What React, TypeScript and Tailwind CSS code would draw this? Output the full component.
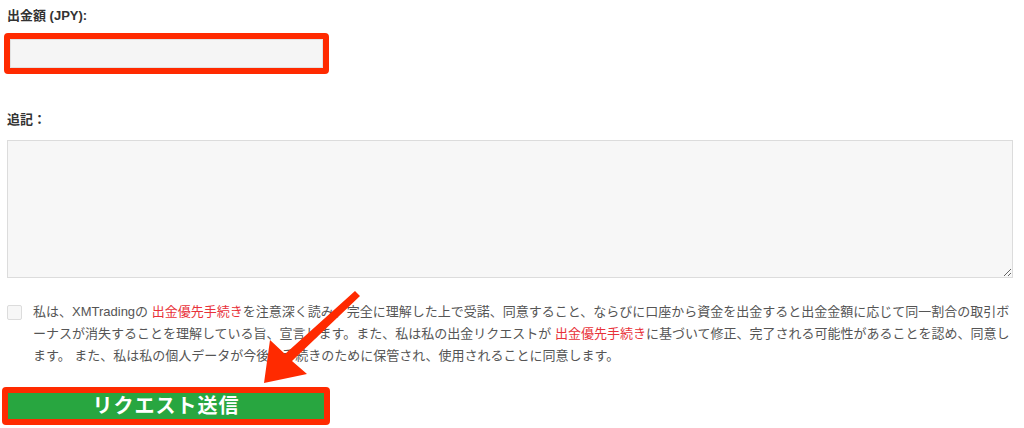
import React from 'react';

const font = { fontFamily: '"Liberation Sans", "Noto Sans CJK JP", sans-serif' };

export default function App() {
  return (
    <div className="relative w-[1024px] h-[428px] bg-white overflow-hidden text-[13px]" style={font}>
      <div className="pt-[6px]">
        {/* Amount */}
        <label className="block pl-[7px] leading-[20px] font-bold text-[#333]">出金額 (JPY):</label>
        <div className="mt-[7px] ml-[4px] w-[325px] h-[41px] border-[6px] border-[#ff2a00] rounded-[4px]">
          <input type="text" className="block w-full h-full bg-[#f5f5f5] border border-[#e2e2e2] outline-none" />
        </div>

        {/* Note */}
        <label className="block mt-[36px] pl-[7px] leading-[20px] font-bold text-[#333]">追記：</label>
        <textarea className="block mt-[10px] ml-[7px] w-[1006px] h-[138px] bg-[#f7f7f7] border border-[#dcdcdc] outline-none" />

        {/* Agreement */}
        <div className="flex mt-[23px] pl-[7px] gap-[11px]">
          <input
            type="checkbox"
            className="appearance-none shrink-0 mt-[4px] w-[15px] h-[15px] bg-[#f7f7f7] border border-[#dcdcdc] rounded-[2px]"
          />
          <p className="w-[980px] leading-[22px] text-[#555] [line-break:loose]">
            私は、XMTradingの <span className="text-[#e8323a]">出金優先手続き</span>を注意深く読み、完全に理解した上で受諾、同意すること、ならびに口座から資金を出金すると出金金額に応じて同一割合の取引ボーナスが消失することを理解している旨、宣言します。また、私は私の出金リクエストが <span className="text-[#e8323a]">出金優先手続き</span>に基づいて修正、完了される可能性があることを認め、同意します。 また、私は私の個人データが今後の手続きのために保管され、使用されることに同意します。
          </p>
        </div>

        {/* Submit */}
        <div className="mt-[20px] ml-[2px] w-[328px] h-[38px] border-[6px] border-[#ff2a00] rounded-[4px]">
          <button className="block w-full h-full bg-[#28a640] text-white font-bold text-[20px] leading-none tracking-[1px]">
            リクエスト送信
          </button>
        </div>
      </div>

      {/* Annotation arrow */}
      <svg className="absolute inset-0 pointer-events-none" width="1024" height="428" viewBox="0 0 1024 428">
        <polygon
          points="355,291 360,296 292,361 307,374 264,383 270,340 285,354"
          fill="#ff2a00"
        />
      </svg>
    </div>
  );
}
